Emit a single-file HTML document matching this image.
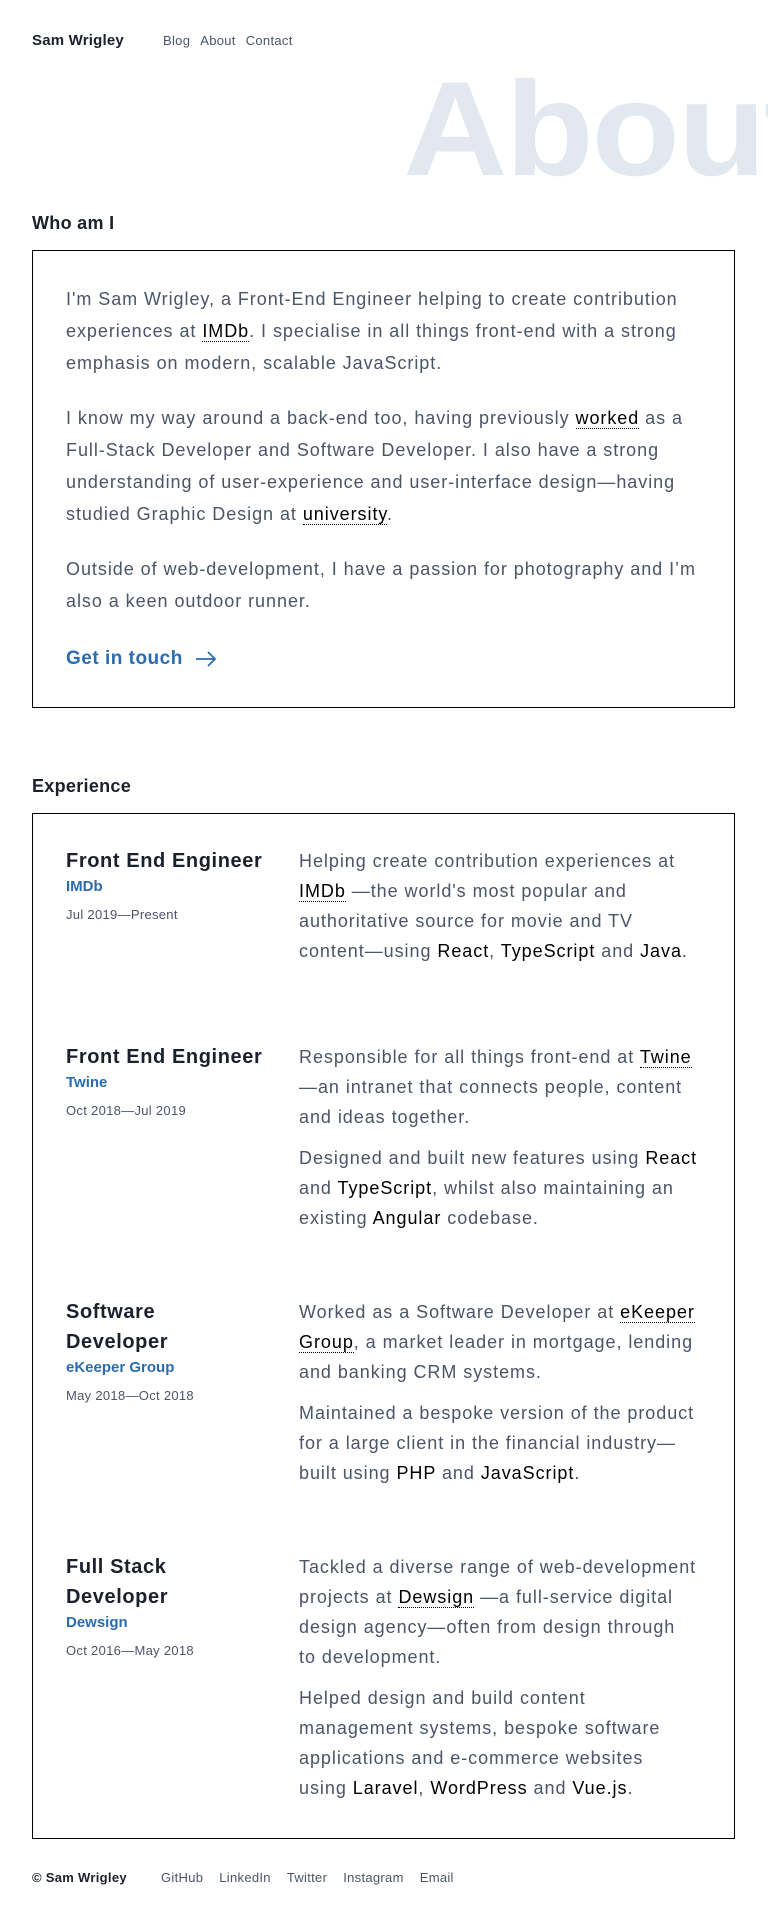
<!DOCTYPE html>
<html><head><meta charset="utf-8"><style>
*{margin:0;padding:0;box-sizing:border-box}
body{width:768px;height:1918px;position:relative;overflow:hidden;background:#fff;font-family:"Liberation Sans",sans-serif;color:#4a5568}
.abs{position:absolute}
.nav{top:30px;left:32px;height:20px;display:flex;align-items:center;font-size:13px;letter-spacing:0.3px}
.nav b{color:#1a202c;font-size:15px;width:131px;letter-spacing:0.2px}
.nav a{color:#4a5568;margin-right:10px;text-decoration:none}
.clip{top:0;left:0;width:768px;height:200px;overflow:hidden}
.big{top:63px;left:403px;font-size:134px;font-weight:900;color:#e2e8f0;letter-spacing:-2px;white-space:nowrap;line-height:134px;transform:scaleX(1.08);transform-origin:left top}
h2{position:absolute;left:32px;font-size:18px;color:#1a202c;font-weight:bold;line-height:24px;letter-spacing:0.3px}
.box{position:absolute;left:32px;width:703px;border:1px solid #000}
.b1{top:250px;height:458px;padding:32px 32px 0 33px}
.b1 p{font-size:18px;line-height:32px;margin-bottom:23px;letter-spacing:0.95px;white-space:nowrap}
u{color:#000;text-decoration:none;border-bottom:1px dotted #000}
.k{color:#000}
.git{color:#2b6cb0;font-weight:bold;font-size:19px;display:flex;align-items:center;gap:12px;padding-top:8px;letter-spacing:0.5px}
.b2{top:813px;height:1026px;padding:32px 32px 0 33px}
.job{display:flex}
.left{width:233px;flex:none}
.left h3{font-size:20px;line-height:30px;color:#1a202c;font-weight:900;letter-spacing:0.6px}
.co{color:#2b6cb0;font-weight:bold;font-size:15px;line-height:26px;margin-top:-2px}
.dt{font-size:13px;line-height:30px;letter-spacing:0.3px}
.right{width:420px;flex:none}
.right p{font-size:18px;line-height:30px;margin-bottom:11px;letter-spacing:0.95px;white-space:nowrap}
.foot{top:1868px;left:32px;display:flex;font-size:13px;line-height:20px;letter-spacing:0.3px}
.foot b{color:#1a202c;width:129px}
.foot span{margin-right:16px}
</style></head><body>
<div class="abs nav"><b>Sam Wrigley</b><a>Blog</a><a>About</a><a>Contact</a></div>
<div class="abs clip"><div class="abs big">About</div></div>
<h2 style="top:211px">Who am I</h2>
<div class="box b1">
<p>I'm Sam Wrigley, a Front-End Engineer helping to create contribution<br>experiences at <u>IMDb</u>. I specialise in all things front-end with a strong<br>emphasis on modern, scalable JavaScript.</p>
<p>I know my way around a back-end too, having previously <u>worked</u> as a<br>Full-Stack Developer and Software Developer. I also have a strong<br>understanding of user-experience and user-interface design—having<br>studied Graphic Design at <u>university</u>.</p>
<p>Outside of web-development, I have a passion for photography and I’m<br>also a keen outdoor runner.</p>
<div class="git">Get in touch <svg width="22" height="16" viewBox="0 0 22 16"><path d="M1 8h19M13 1l7 7-7 7" fill="none" stroke="#2b6cb0" stroke-width="1.8"/></svg></div>
</div>
<h2 style="top:774px">Experience</h2>
<div class="box b2">
<div class="job"><div class="left"><h3>Front End Engineer</h3><div class="co">IMDb</div><div class="dt">Jul 2019—Present</div></div>
<div class="right"><p>Helping create contribution experiences at<br><u>IMDb</u> —the world's most popular and<br>authoritative source for movie and TV<br>content—using <span class="k">React</span>, <span class="k">TypeScript</span> and <span class="k">Java</span>.</p></div></div>
<div class="job" style="margin-top:65px"><div class="left"><h3>Front End Engineer</h3><div class="co">Twine</div><div class="dt">Oct 2018—Jul 2019</div></div>
<div class="right"><p>Responsible for all things front-end at <u>Twine</u><br>—an intranet that connects people, content<br>and ideas together.</p><p>Designed and built new features using <span class="k">React</span><br>and <span class="k">TypeScript</span>, whilst also maintaining an<br>existing <span class="k">Angular</span> codebase.</p></div></div>
<div class="job" style="margin-top:53px"><div class="left"><h3>Software<br>Developer</h3><div class="co">eKeeper Group</div><div class="dt">May 2018—Oct 2018</div></div>
<div class="right"><p>Worked as a Software Developer at <u>eKeeper</u><br><u>Group</u>, a market leader in mortgage, lending<br>and banking CRM systems.</p><p>Maintained a bespoke version of the product<br>for a large client in the financial industry—<br>built using <span class="k">PHP</span> and <span class="k">JavaScript</span>.</p></div></div>
<div class="job" style="margin-top:53px"><div class="left"><h3>Full Stack<br>Developer</h3><div class="co">Dewsign</div><div class="dt">Oct 2016—May 2018</div></div>
<div class="right"><p>Tackled a diverse range of web-development<br>projects at <u>Dewsign</u> —a full-service digital<br>design agency—often from design through<br>to development.</p><p>Helped design and build content<br>management systems, bespoke software<br>applications and e-commerce websites<br>using <span class="k">Laravel</span>, <span class="k">WordPress</span> and <span class="k">Vue.js</span>.</p></div></div>
</div>
<div class="abs foot"><b>© Sam Wrigley</b><span>GitHub</span><span>LinkedIn</span><span>Twitter</span><span>Instagram</span><span>Email</span></div>
</body></html>
